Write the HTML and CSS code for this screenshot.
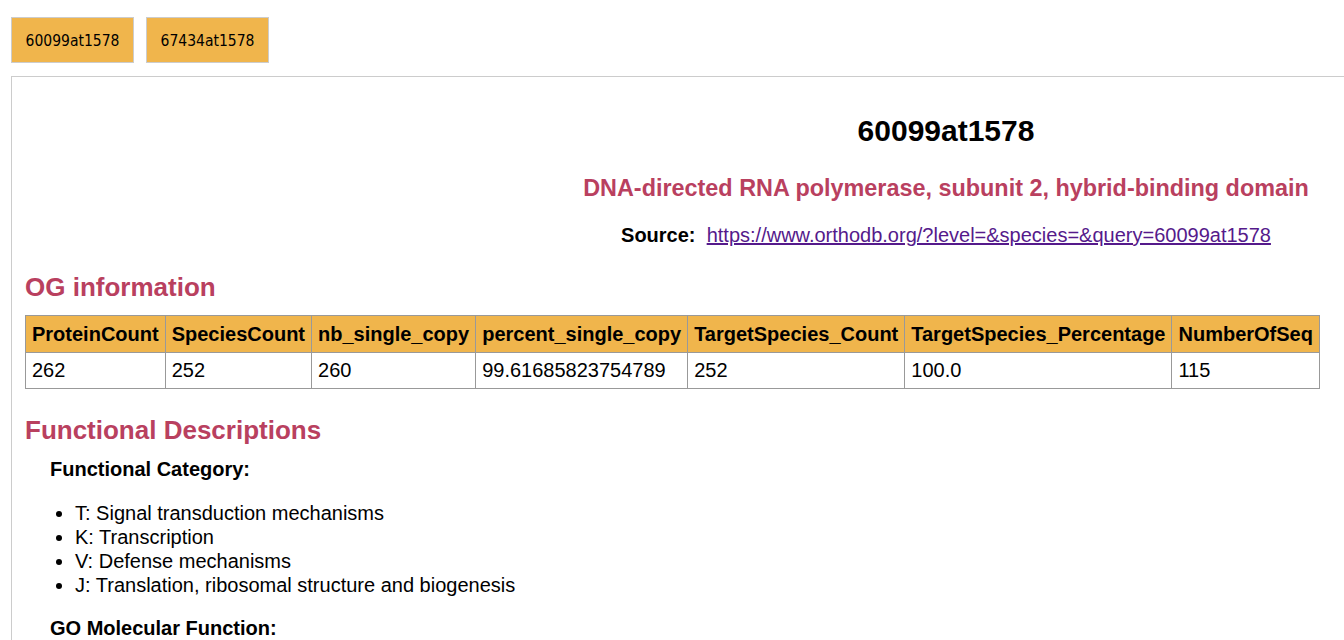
FILE: index.html
```html
<!DOCTYPE html>
<html>
<head>
<meta charset="utf-8">
<link rel="stylesheet" href="styles.css">
</head>
<body>
<div class="tabs">
  <div class="tab">60099at1578</div>
  <div class="tab">67434at1578</div>
</div>
<div class="panel">
  <div class="header">
    <h1 class="title">60099at1578</h1>
    <h2 class="subtitle">DNA-directed RNA polymerase, subunit 2, hybrid-binding domain</h2>
    <p class="source"><b>Source:</b>&nbsp; <a class="link" href="#">https://www.orthodb.org/?level=&amp;species=&amp;query=60099at1578</a></p>
  </div>
  <h3 class="section">OG information</h3>
  <table class="og">
    <thead>
      <tr><th>ProteinCount</th><th>SpeciesCount</th><th>nb_single_copy</th><th>percent_single_copy</th><th>TargetSpecies_Count</th><th>TargetSpecies_Percentage</th><th>NumberOfSeq</th></tr>
    </thead>
    <tbody>
      <tr><td>262</td><td>252</td><td>260</td><td>99.61685823754789</td><td>252</td><td>100.0</td><td>115</td></tr>
    </tbody>
  </table>
  <h3 class="section section-func">Functional Descriptions</h3>
  <div class="func">
    <h4 class="label">Functional Category:</h4>
    <ul class="list">
      <li>T: Signal transduction mechanisms</li>
      <li>K: Transcription</li>
      <li>V: Defense mechanisms</li>
      <li>J: Translation, ribosomal structure and biogenesis</li>
    </ul>
    <h4 class="label">GO Molecular Function:</h4>
  </div>
</div>
</body>
</html>
```

FILE: styles.css
```css
html, body {
  margin: 0;
  padding: 0;
  background: #ffffff;
  overflow: hidden;
}
body {
  font-family: "Liberation Sans", Arial, sans-serif;
  color: #000;
}
.tabs {
  display: flex;
  gap: 12px;
  padding: 17px 0 0 11px;
}
.tab {
  box-sizing: border-box;
  width: 123px;
  height: 46px;
  border: 1px solid #cccccc;
  background: #f0b54c;
  font-family: "DejaVu Sans Condensed", "DejaVu Sans", Verdana, sans-serif;
  font-stretch: condensed;
  font-size: 15.5px;
  padding-top: 1px;
  display: flex;
  align-items: center;
  justify-content: center;
}
.panel {
  margin: 13px 0 0 11px;
  border: 1px solid #cccccc;
  border-right: 0;
  border-bottom: 0;
  padding: 37px 0 0 13px;
  height: 600px;
}
.header {
  padding-left: 523px;
  text-align: center;
}
.title {
  margin: 0;
  font-size: 30px;
  line-height: 34px;
  font-weight: bold;
}
.subtitle {
  margin: 27px 0 0;
  font-size: 23.4px;
  line-height: 26px;
  color: #b9405f;
  font-weight: bold;
}
.source {
  margin: 22px 0 0;
  font-size: 20px;
  line-height: 24px;
}
.link {
  color: #551a8b;
}
.section {
  margin: 25px 0 0;
  font-size: 26px;
  line-height: 30px;
  color: #b9405f;
  font-weight: bold;
}
.og {
  margin-top: 13px;
  border-collapse: collapse;
  font-size: 20px;
}
.og th, .og td {
  border: 1px solid #999999;
  padding: 6px 6px;
  line-height: 23px;
  text-align: left;
  white-space: nowrap;
}
.og th {
  background: #f0b54c;
  font-weight: bold;
  line-height: 24px;
}
.section-func {
  margin-top: 26px;
}
.func {
  padding-left: 25px;
}
.label {
  margin: 12px 0 0;
  font-size: 20px;
  line-height: 24px;
  font-weight: bold;
}
.list {
  margin: 20px 0 0;
  padding-left: 25px;
  font-size: 20px;
  line-height: 24px;
}
.list + .label {
  margin-top: 19px;
}
```
